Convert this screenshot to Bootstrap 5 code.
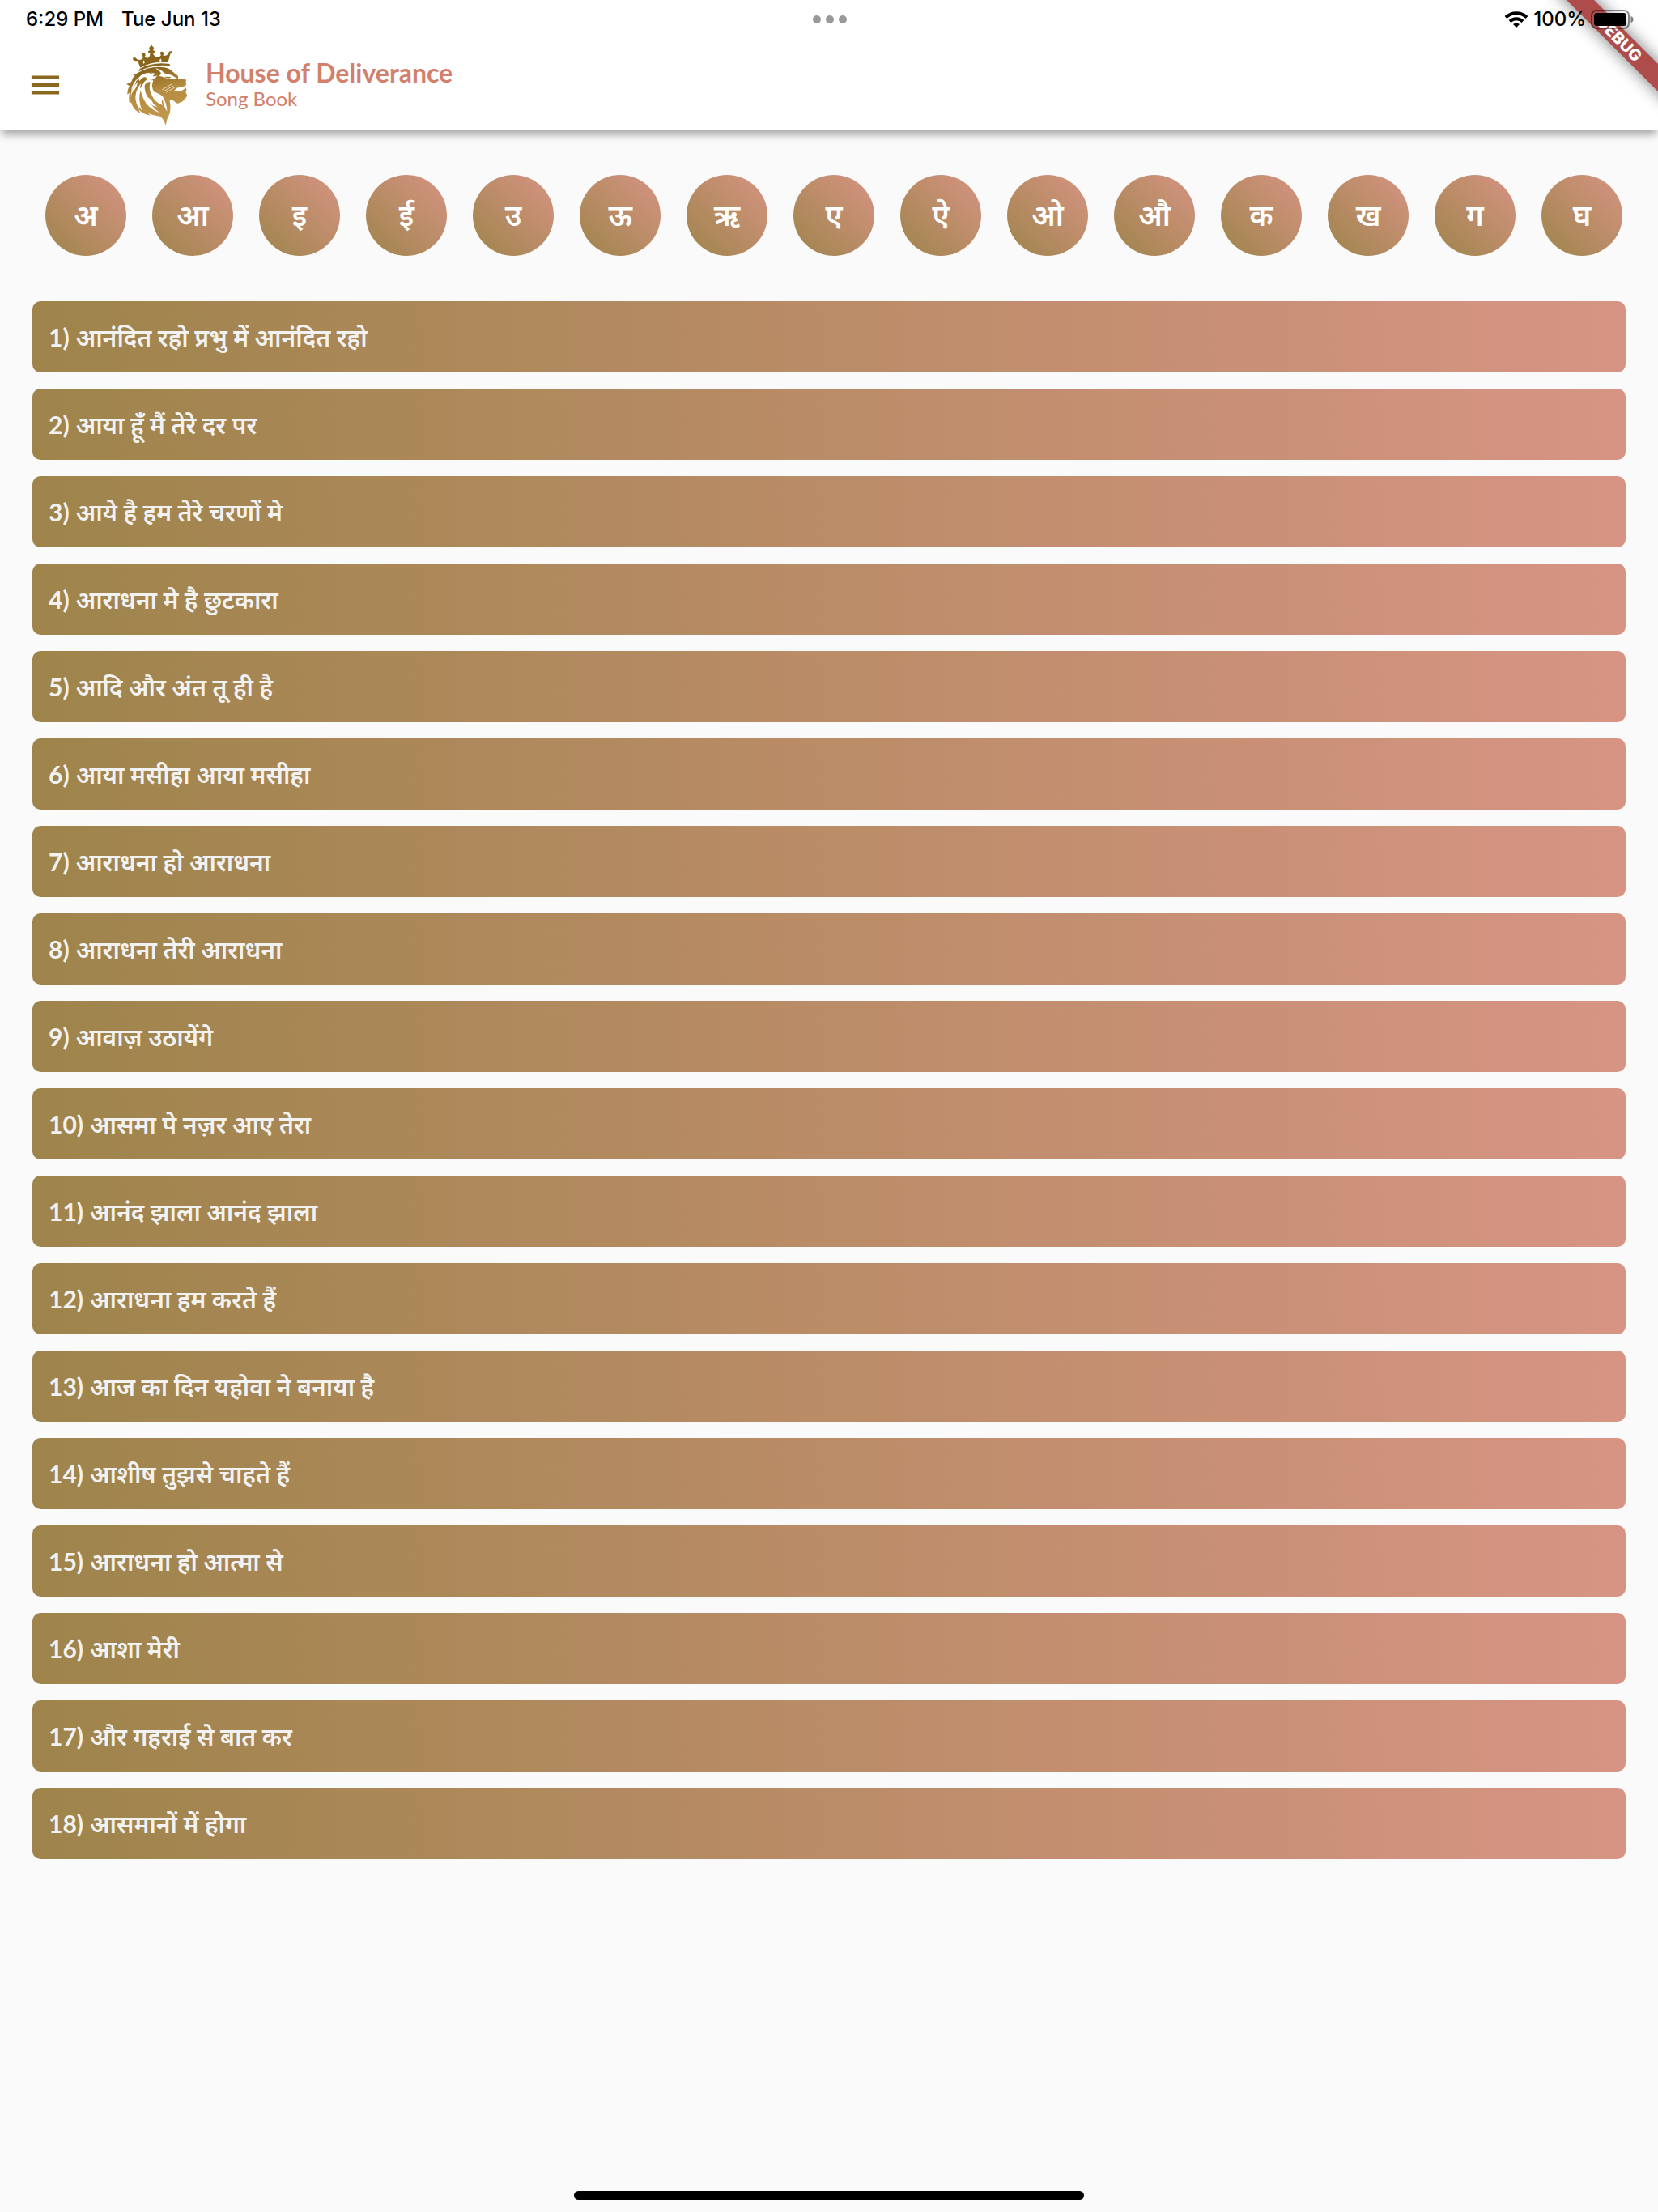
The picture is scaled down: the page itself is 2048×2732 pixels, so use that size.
<!DOCTYPE html>
<html lang="hi">
<head>
<meta charset="utf-8">
<meta name="viewport" content="width=device-width, initial-scale=1">
<title>House of Deliverance Song Book</title>
<link href="https://cdn.jsdelivr.net/npm/bootstrap@5.3.0/dist/css/bootstrap.min.css" rel="stylesheet">
<style>
  :root { --gold: #9e844b; --rose: #d79484; --brand: #d2806c; }
  body { background: #fafafa; font-family: Lato, "Noto Sans", sans-serif; }
  .app-header { box-shadow: 0 8px 10px -2px rgba(0,0,0,.35); z-index: 1; }
  .status-bar { height: 48px; padding: 0 30px 0 32px; font: 500 24px/48px Inter, sans-serif; color: #000; }
  .status-bar > div { flex: 1 1 0; }
  .status-time { gap: 22px; }
  .dots { gap: 6px; }
  .dots i { width: 10px; height: 10px; background: #999; }
  .status-right { gap: 6px; z-index: 3; }
  .app-bar { height: 112px; padding: 0 36px; }
  .menu-btn { width: 40px; height: 40px; margin-right: 74px; }
  .brand-logo { width: 90px; height: 110px; margin-right: 14px; }
  .brand-title { font-size: 32px; line-height: 36px; color: var(--brand); font-weight: 700; }
  .brand-sub { font-size: 24px; line-height: 28px; color: var(--brand); }
  .ribbon-clip { width: 180px; height: 160px; top: 0; right: 0; }
  .ribbon { top: 36px; right: -52px; width: 200px; height: 24px; transform: rotate(45deg);
    background: #ae4c4c; color: #fff; font: 800 20px/24px Inter, sans-serif; text-align: center; box-shadow: 0 0 20px rgba(0,0,0,.55); }
  .letters { gap: 32px; padding: 56px 44px 56px 56px; }
  .letter-btn { flex: 0 0 100px; height: 100px; border: 0; color: #fff; font-size: 36px; line-height: 44px; font-weight: 600;
    font-family: "Noto Sans", sans-serif; background: linear-gradient(45deg, var(--gold), var(--rose)); }
  .songs { gap: 20px; padding: 0 40px; }
  .song-row { height: 88px; gap: 8px; padding: 0 20px; border-radius: 10px; color: #f2f2f2; font-size: 30px; line-height: 44px; font-weight: 600;
    background: linear-gradient(88deg, var(--gold), var(--rose)); }
  .song-row span { font-weight: 700; }
  .home-bar { width: 630px; height: 11px; margin: auto auto 15px; background: #000; }
</style>
<script src="https://cdn.jsdelivr.net/npm/bootstrap@5.3.0/dist/js/bootstrap.bundle.min.js"></script>
</head>
<body class="d-flex flex-column min-vh-100">
<header class="app-header bg-white position-relative">
  <div class="status-bar d-flex align-items-center">
    <div class="status-time d-flex"><span>6:29 PM</span><span>Tue Jun 13</span></div>
    <div class="dots d-flex justify-content-center"><i class="rounded-circle"></i><i class="rounded-circle"></i><i class="rounded-circle"></i></div>
    <div class="status-right d-flex align-items-center justify-content-end position-relative">
      <svg width="30" height="22" viewBox="0 0 30 22" fill="none" stroke="#000" stroke-width="4" aria-hidden="true"><path d="M2 8.500A18.500 18.500 0 0 1 28 8.500M7 13.500A11.500 11.500 0 0 1 23 13.500"/><path d="M15 21l-4-4a6 6 0 0 1 8 0z" fill="#000" stroke="none"/></svg>
      <span>100%</span>
      <svg width="53" height="24" viewBox="0 0 53 24" aria-hidden="true"><rect x="1" y="1" width="46" height="22" rx="6" fill="none" stroke="#000" stroke-opacity=".45" stroke-width="2"/><rect x="4" y="4" width="40" height="16" rx="3.500"/><path d="M49.500 8v8q3-1 3-4t-3-4z" fill-opacity=".5"/></svg>
    </div>
  </div>
  <div class="app-bar d-flex align-items-center">
    <button type="button" class="menu-btn btn p-0 d-flex" aria-label="Menu"><svg width="40" height="40" viewBox="0 0 40 40" fill="#8c6720" aria-hidden="true"><path d="M2 8h36v4H2zM2 18h36v4H2zM2 28h36v4H2z"/></svg></button>
    <svg class="brand-logo" viewBox="0 0 270 330" role="img" aria-label="Lion wearing a crown">
      <defs><linearGradient id="lg" gradientUnits="userSpaceOnUse" x1="90" y1="20" x2="160" y2="310"><stop offset="0" stop-color="#8d661b"/><stop offset=".3" stop-color="#8a641c"/><stop offset=".6" stop-color="#b68d40"/><stop offset="1" stop-color="#c39a4d"/></linearGradient></defs>
      <g fill="url(#lg)">
        <path d="M70 104 60 78Q50 80 43 74 40 67 47 66 54 66 57 72 68 78 77 71 82 66 79 62 72 56 77 51 85 47 89 54 90 60 86 63 94 71 101 66 107 60 106 50 97 50 99 43 106 41 105 36 100 33 105 27 109 23 111 17 114 24 118 27 123 33 117 36 118 41 124 43 126 50 117 50 121 62 132 64 144 65 147 57 142 53 144 47 150 42 156 47 159 54 154 58 160 64 174 54 173 46 181 43L190 42Q189 48 181 53L173 83Q115 78 70 104Z"/>
        <path d="M68 108Q115 82 178 90L181 97Q115 89 64 118Z"/>
        <path d="M55 126Q100 98 150 102 175 104 184 114 196 124 208 133 214 142 206 147L232 145Q242 147 239 156L240 167Q236 175 226 174L205 179 195 190 212 192Q228 190 238 178 244 186 238 194L244 207Q240 216 232 222 228 232 215 233 206 242 196 228 186 222 178 222 186 260 176 280 166 298 164 318 158 294 143 284 118 282 98 272L108 281Q70 276 60 250L70 272Q44 262 36 232L31 238Q25 218 30 196L22 204Q22 184 30 172L18 164Q32 164 38 154 42 138 52 133L42 132Z"/>
      </g>
      <g fill="#fff">
        <path d="M64 141Q75 123 108 122 95 129 94 140 80 134 66 154 69 140 55 153 51 171 36 188 42 157 64 141Z"/>
        <path d="M98 130Q112 120 126 126L116 134Q123 139 133 132 125 149 106 150 92 157 84 170 79 154 95 149 87 142 98 130Z"/>
        <path d="M125 106Q148 110 158 124L188 132 200 140 210 146 190 147Q160 143 152 137L138 134Q150 129 145 121 138 113 125 106Z"/>
        <path d="M60 156Q58 178 42 193 33 207 37 224 30 198 44 177Z"/>
        <path d="M70 164Q57 183 54 198 48 220 60 246L76 262Q60 220 71 188 79 222 98 244 116 262 142 271 112 249 102 224 84 193 86 168 97 154 107 157 99 182 112 204 121 231 153 243 146 228 153 222 156 246 169 266 168 235 153 211 138 197 122 194 108 178 118 151 95 146 81 163 64 196 72 164Z"/>
        <path d="M90 206Q96 232 118 245L134 250 120 239 111 224Z"/>
      </g>
      <path d="M158 137 184 138 178 143 164 141Z" fill="url(#lg)"/>
      <path d="M150 186 186 165M156 192 192 171M166 196 197 177" stroke="#fff" stroke-width="2"/>
      <path d="M83 76 87 83 83 90 79 83ZM145 70 149 77 145 84 141 77Z" fill="#fff"/>
    </svg>
    <div><div class="brand-title">House of Deliverance</div><div class="brand-sub">Song Book</div></div>
  </div>
  <div class="ribbon-clip position-absolute overflow-hidden"><div class="ribbon position-absolute">DEBUG</div></div>
</header>
<main>
  <nav class="letters d-flex overflow-hidden" aria-label="Letters">
    <button type="button" class="letter-btn rounded-circle">अ</button>
    <button type="button" class="letter-btn rounded-circle">आ</button>
    <button type="button" class="letter-btn rounded-circle">इ</button>
    <button type="button" class="letter-btn rounded-circle">ई</button>
    <button type="button" class="letter-btn rounded-circle">उ</button>
    <button type="button" class="letter-btn rounded-circle">ऊ</button>
    <button type="button" class="letter-btn rounded-circle">ऋ</button>
    <button type="button" class="letter-btn rounded-circle">ए</button>
    <button type="button" class="letter-btn rounded-circle">ऐ</button>
    <button type="button" class="letter-btn rounded-circle">ओ</button>
    <button type="button" class="letter-btn rounded-circle">औ</button>
    <button type="button" class="letter-btn rounded-circle">क</button>
    <button type="button" class="letter-btn rounded-circle">ख</button>
    <button type="button" class="letter-btn rounded-circle">ग</button>
    <button type="button" class="letter-btn rounded-circle">घ</button>
  </nav>
  <div class="songs d-flex flex-column">
    <a href="#" class="song-row d-flex align-items-center text-decoration-none"><span>1)</span> आनंदित रहो प्रभु में आनंदित रहो</a>
    <a href="#" class="song-row d-flex align-items-center text-decoration-none"><span>2)</span> आया हूँ मैं तेरे दर पर</a>
    <a href="#" class="song-row d-flex align-items-center text-decoration-none"><span>3)</span> आये है हम तेरे चरणों मे</a>
    <a href="#" class="song-row d-flex align-items-center text-decoration-none"><span>4)</span> आराधना मे है छुटकारा</a>
    <a href="#" class="song-row d-flex align-items-center text-decoration-none"><span>5)</span> आदि और अंत तू ही है</a>
    <a href="#" class="song-row d-flex align-items-center text-decoration-none"><span>6)</span> आया मसीहा आया मसीहा</a>
    <a href="#" class="song-row d-flex align-items-center text-decoration-none"><span>7)</span> आराधना हो आराधना</a>
    <a href="#" class="song-row d-flex align-items-center text-decoration-none"><span>8)</span> आराधना तेरी आराधना</a>
    <a href="#" class="song-row d-flex align-items-center text-decoration-none"><span>9)</span> आवाज़ उठायेंगे</a>
    <a href="#" class="song-row d-flex align-items-center text-decoration-none"><span>10)</span> आसमा पे नज़र आए तेरा</a>
    <a href="#" class="song-row d-flex align-items-center text-decoration-none"><span>11)</span> आनंद झाला आनंद झाला</a>
    <a href="#" class="song-row d-flex align-items-center text-decoration-none"><span>12)</span> आराधना हम करते हैं</a>
    <a href="#" class="song-row d-flex align-items-center text-decoration-none"><span>13)</span> आज का दिन यहोवा ने बनाया है</a>
    <a href="#" class="song-row d-flex align-items-center text-decoration-none"><span>14)</span> आशीष तुझसे चाहते हैं</a>
    <a href="#" class="song-row d-flex align-items-center text-decoration-none"><span>15)</span> आराधना हो आत्मा से</a>
    <a href="#" class="song-row d-flex align-items-center text-decoration-none"><span>16)</span> आशा मेरी</a>
    <a href="#" class="song-row d-flex align-items-center text-decoration-none"><span>17)</span> और गहराई से बात कर</a>
    <a href="#" class="song-row d-flex align-items-center text-decoration-none"><span>18)</span> आसमानों में होगा</a>
  </div>
</main>
<div class="home-bar rounded-pill"></div>
</body>
</html>
